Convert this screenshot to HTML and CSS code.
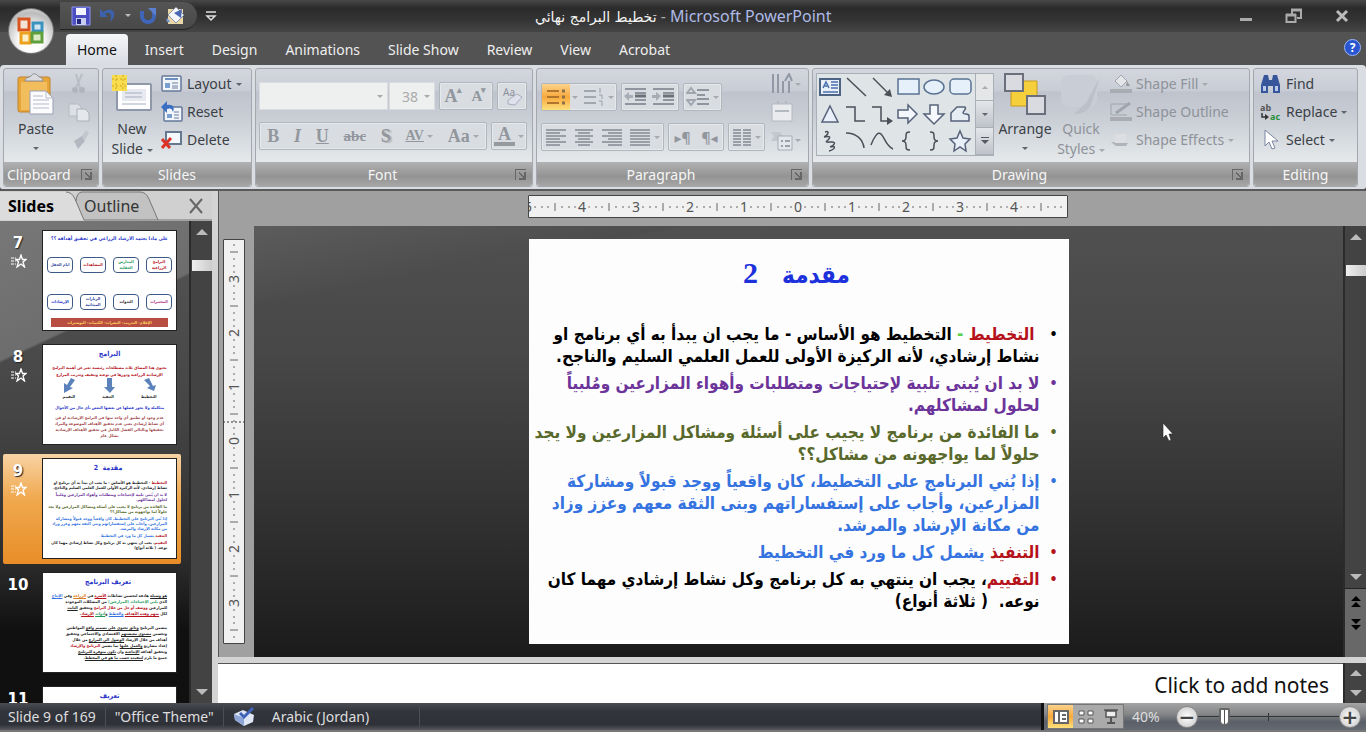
FILE: index.html
```html
<!DOCTYPE html>
<html lang="en">
<head>
    <meta charset="UTF-8">
    <meta name="viewport" content="width=device-width, initial-scale=1.0">
    <title>تخطيط البرامج نهائي - Microsoft PowerPoint</title>
    <link rel="stylesheet" href="styles.css">
</head>
<body>

<header class="titlebar">
    <button class="office-btn" aria-label="Office Button">
        <svg width="28" height="30" viewBox="0 0 28 30">
            <rect x="2" y="3" width="10" height="11" fill="#f3e3d6" stroke="#d9541e" stroke-width="3"/>
            <rect x="16" y="7" width="9" height="8" fill="#cfe6f2" stroke="#3a93bd" stroke-width="3"/>
            <rect x="4" y="17" width="9" height="10" fill="#fbf0c8" stroke="#eda21f" stroke-width="3"/>
            <rect x="15" y="17" width="10" height="9" fill="#dcecc6" stroke="#5f9f3c" stroke-width="3"/>
        </svg>
    </button>
    <div class="quick">
        <button aria-label="Save"><svg width="20" height="20" viewBox="0 0 20 20"><path d="M1 1h18v18H1z" fill="#4a4ec0" stroke="#8f93ee"/><path d="M5 2h10v7H5z" fill="#f4f5ff"/><path d="M5 12h10v7H5z" fill="#c9cdf0"/><path d="M6 13h4v5H6z" fill="#23267c"/></svg></button>
        <button aria-label="Undo"><svg width="18" height="18" viewBox="0 0 18 18"><path d="M1 2v8h8L6 7c4-3 8 0 5 8 7-6 5-14-3-12L4 5z" fill="#3d62ad"/></svg></button>
        <span class="arrow light"></span>
        <button aria-label="Repeat"><svg width="18" height="18" viewBox="0 0 18 18"><path d="M3 4v5c0 8 12 8 12 0V5" fill="none" stroke="#3f64b8" stroke-width="4"/><path d="M9 1h8v8z" fill="#5b80cf"/></svg></button>
        <button aria-label="Shape fill"><svg width="22" height="20" viewBox="0 0 22 20"><path d="M3 3h15v15H3z" fill="#ead9a6"/><path d="M3 9l8-8 8 8-8 8z" fill="#f5f6fa" stroke="#8891a8"/><path d="M9 7l8-4-1 9z" fill="#4b67b3"/><path d="M2 12c-2 4 2 6 3 3z" fill="#7b9ad2"/></svg></button>
    </div>
    <button class="quick-more" aria-label="Customize Quick Access Toolbar"><svg width="12" height="12" viewBox="0 0 12 12"><path d="M1 2h10M2 6h8l-4 4z" fill="none" stroke="#ddd" stroke-width="1.5"/></svg></button>
    <h1 class="doc-title"><span class="doc-name">تخطيط البرامج نهائي</span> <span class="dash">-</span> <span class="app-name">Microsoft PowerPoint</span></h1>
    <div class="win-btns">
        <button aria-label="Minimize"><svg width="14" height="16" viewBox="0 0 14 16"><path d="M1 10h12v3H1z" fill="#aaa"/></svg></button>
        <button aria-label="Restore"><svg width="18" height="18" viewBox="0 0 18 18"><path d="M7 8V3h9v8h-4M1.500 8h9v7h-9z" fill="none" stroke="#aaa" stroke-width="2"/><path d="M6 3h11M1 8h10" stroke="#aaa" stroke-width="3"/></svg></button>
        <button aria-label="Close"><svg width="14" height="14" viewBox="0 0 14 14"><path d="M2 2l10 10M12 2L2 12" stroke="#bbb" stroke-width="3"/></svg></button>
    </div>
</header>

<nav class="tabs">
    <button class="tab active">Home</button>
    <button class="tab">Insert</button>
    <button class="tab">Design</button>
    <button class="tab">Animations</button>
    <button class="tab">Slide Show</button>
    <button class="tab">Review</button>
    <button class="tab">View</button>
    <button class="tab">Acrobat</button>
    <button class="help" aria-label="Help">?</button>
</nav>

<section class="ribbon">
    <div class="group g-clip">
        <div class="group-body">
            <button class="big">
                <svg width="40" height="42" viewBox="0 0 40 42"><rect x="2" y="4" width="32" height="35" rx="2" fill="#e8a63a" stroke="#c1832a"/><path d="M5 9h26v28H5z" fill="#f2bd5c"/><path d="M9 8c0-4 4-3 6-5 2-3 5-3 7 0 2 2 5 1 5 5z" fill="#d8dade" stroke="#8b8e96"/><path d="M14 18h16l7 7v16H14z" fill="#fcfcfe" stroke="#9aa1b5"/><path d="M30 18v7h7M17 23h10M17 27h16M17 31h16M17 35h16" fill="none" stroke="#b4bac9"/></svg>
                <span>Paste</span>
                <span class="arrow"></span>
            </button>
            <div class="rows">
                <button aria-label="Cut"><svg width="22" height="22" viewBox="0 0 22 22"><path d="M8 1l4 14M14 1L8 15" stroke="#b9bdc5" stroke-width="2"/><circle cx="7" cy="17" r="3" fill="#b0b5bd"/><circle cx="14" cy="17" r="3" fill="#b0b5bd"/></svg></button>
                <button aria-label="Copy"><svg width="22" height="22" viewBox="0 0 22 22"><path d="M1 3h9l3 3v9H1z" fill="#dcdfe5" stroke="#b5bac3"/><path d="M9 8h8l4 4v8H9z" fill="#e4e7ec" stroke="#abb0ba"/></svg></button>
                <button aria-label="Format Painter"><svg width="22" height="22" viewBox="0 0 22 22"><path d="M14 7l4-6 3 3-4 7z" fill="#c2c6cd"/><path d="M6 12l8-5 3 5-7 8z" fill="#b3b7bf"/></svg></button>
            </div>
        </div>
        <div class="group-label"><span>Clipboard</span><button class="launch" aria-label="Clipboard options"></button></div>
    </div>

    <div class="group g-slides">
        <div class="group-body">
            <button class="big">
                <svg width="42" height="42" viewBox="0 0 42 42"><rect x="5" y="10" width="36" height="28" rx="2" fill="#8e98a8"/><rect x="7" y="12" width="32" height="24" fill="#fdfdff"/><path d="M11 16h24v12H11z" fill="#e6e9f0"/><path d="M14 20h17M14 24h17M11 31h24" stroke="#a5adbc"/><path d="M1 2h15v16H1z" fill="#f8dd4e"/><path d="M1 6h15M1 13h15M5 2v16M12 2v16" stroke="#cfa51f" stroke-dasharray="2 2"/></svg>
                <span>New</span>
                <span>Slide <span class="arrow"></span></span>
            </button>
            <div class="rows">
                <button><svg width="22" height="20" viewBox="0 0 22 20"><rect x="1" y="2" width="19" height="15" rx="1" fill="#f2f5fa" stroke="#64789b" stroke-width="1.500"/><path d="M4 5h13" stroke="#6f8fc0" stroke-width="2"/><path d="M4 9h5v5H4z" fill="#7b9ed0"/><path d="M11 9h6M11 12h6M11 14h6" stroke="#6b7d9c"/></svg>Layout <span class="arrow"></span></button>
                <button><svg width="22" height="22" viewBox="0 0 22 22"><rect x="3" y="6" width="18" height="14" rx="1" fill="#f2f5fa" stroke="#64789b" stroke-width="1.500"/><path d="M6 13h5v4H6z" fill="#7b9ed0"/><path d="M13 11h5M13 14h5M13 17h5" stroke="#6b7d9c"/><path d="M0 6l6-6v4c6-1 8 2 6 7-1-4-3-4-6-3v4z" fill="#3b6fc4"/></svg>Reset</button>
                <button><svg width="22" height="20" viewBox="0 0 22 20"><rect x="5" y="2" width="15" height="12" fill="#f4f8fd" stroke="#66788f" stroke-width="2"/><path d="M1 9l8 9M10 8l-9 10" stroke="#dd3326" stroke-width="3"/></svg>Delete</button>
            </div>
        </div>
        <div class="group-label"><span>Slides</span></div>
    </div>

    <div class="group g-font">
        <div class="group-body stack">
            <div class="tool-row">
                <div class="combo-wrap">
                    <div class="combo wide"><select aria-label="Font"><option></option></select><span class="arrow pale"></span></div>
                    <div class="combo"><select aria-label="Font size"><option>38</option></select><span class="arrow pale"></span></div>
                </div>
                <div class="tool-box">
                    <button class="serif" aria-label="Grow Font">A<sup>▴</sup></button>
                    <button class="serif small" aria-label="Shrink Font">A<sup>▾</sup></button>
                </div>
                <div class="tool-box">
                    <button aria-label="Clear Formatting"><svg width="24" height="22" viewBox="0 0 24 22"><text x="3" y="11" font-size="10" fill="#8c909c">Aa</text><path d="M8 15l9-6 5 3-7 8-7-1z" fill="#dfe2ec" stroke="#a8acbd"/></svg></button>
                </div>
            </div>
            <div class="tool-row">
                <div class="tool-box grow">
                    <button class="serif">B</button>
                    <button class="serif ital">I</button>
                    <button class="serif under">U</button>
                    <button class="serif strike">abc</button>
                    <button class="serif shadow">S</button>
                    <button class="serif spaced">AV<span class="arrow pale"></span></button>
                    <button class="serif">Aa<span class="arrow pale"></span></button>
                </div>
                <div class="tool-box">
                    <button class="serif color" aria-label="Font Color"><b>A</b><span class="arrow pale"></span></button>
                </div>
            </div>
        </div>
        <div class="group-label"><span>Font</span><button class="launch" aria-label="Font options"></button></div>
    </div>

    <div class="group g-para">
        <div class="group-body">
            <div class="stack">
                <div class="tool-row">
                    <div class="tool-box">
                        <button class="on" aria-label="Bullets"><svg width="24" height="22" viewBox="0 0 24 22"><path d="M3 5h12M3 11h12M3 17h12" stroke="#b0762d" stroke-width="2"/><path d="M18 5h3M18 11h3M18 17h3" stroke="#8d7047" stroke-width="3"/></svg></button>
                        <button aria-label="Numbering"><span class="arrow pale"></span><svg width="24" height="22" viewBox="0 0 24 22"><path d="M3 5h12M3 11h12M3 17h12" stroke="#a2a7ae" stroke-width="2"/><path d="M19 2v5M18 9h3v4M18 15h3v5" fill="none" stroke="#9aa0a8"/></svg><span class="arrow pale"></span></button>
                    </div>
                    <div class="tool-box">
                        <button aria-label="Decrease Indent"><svg width="24" height="22" viewBox="0 0 24 22"><path d="M1 3h21M11 7h11M11 14h11M1 18h21" stroke="#8f959e" stroke-width="2"/><path d="M11 10h11" stroke="#6c7178" stroke-width="3"/><path d="M0 10l5-4v3h4v3H5v3z" fill="#a7adb5"/></svg></button>
                        <button aria-label="Increase Indent"><svg width="24" height="22" viewBox="0 0 24 22"><path d="M1 3h21M11 7h11M11 14h11M1 18h21" stroke="#8f959e" stroke-width="2"/><path d="M11 10h11" stroke="#6c7178" stroke-width="3"/><path d="M9 10L4 6v3H0v3h4v3z" fill="#a7adb5"/></svg></button>
                    </div>
                    <div class="tool-box">
                        <button aria-label="Line Spacing"><svg width="24" height="22" viewBox="0 0 24 22"><path d="M11 4h12M11 9h8M11 13h12M11 18h12" stroke="#8f959e" stroke-width="2"/><path d="M1 7l4-5 4 5zM1 14l4 5 4-5z" fill="none" stroke="#a0a6ae" stroke-width="2"/></svg><span class="arrow pale"></span></button>
                    </div>
                </div>
                <div class="tool-row roomy">
                    <div class="tool-box">
                        <button aria-label="Align Left"><svg width="22" height="20" viewBox="0 0 22 20"><path d="M1 3h20M1 6h14M1 9h20M1 12h14M1 15h20M1 18h14" stroke="#838a94" stroke-width="1.500"/></svg></button>
                        <button aria-label="Center"><svg width="22" height="20" viewBox="0 0 22 20"><path d="M2 3h18M5 6h12M2 9h18M5 12h12M2 15h18M5 18h12" stroke="#838a94" stroke-width="1.500"/></svg></button>
                        <button aria-label="Align Right"><svg width="22" height="20" viewBox="0 0 22 20"><path d="M1 3h20M7 6h14M1 9h20M7 12h14M1 15h20M7 18h14" stroke="#838a94" stroke-width="1.500"/></svg></button>
                        <button aria-label="Justify"><svg width="22" height="20" viewBox="0 0 22 20"><path d="M1 3h20M1 6h20M1 9h20M1 12h20M1 15h20M1 18h20" stroke="#838a94" stroke-width="1.500"/></svg><span class="arrow pale"></span></button>
                    </div>
                    <div class="tool-box">
                        <button class="pil" aria-label="Left-to-Right">▸¶</button>
                        <button class="pil" aria-label="Right-to-Left">¶◂</button>
                    </div>
                    <div class="tool-box">
                        <button aria-label="Columns"><svg width="20" height="20" viewBox="0 0 20 20"><path d="M1 3h8M11 3h8M1 6h8M11 6h8M1 9h8M11 9h8M1 12h8M11 12h8M1 15h8M11 15h8M1 18h8M11 18h8" stroke="#838a94" stroke-width="1.500"/></svg><span class="arrow pale"></span></button>
                    </div>
                </div>
            </div>
            <div class="rows">
                <button aria-label="Text Direction"><svg width="24" height="22" viewBox="0 0 24 22"><path d="M3 1v19M8 1v19M13 8v12M19 8v12" stroke="#9299a6" stroke-width="2"/><path d="M15 8l4-7 3 7" fill="none" stroke="#9299a6" stroke-width="2"/></svg><span class="arrow pale"></span></button>
                <button aria-label="Align Text"><svg width="24" height="22" viewBox="0 0 24 22"><path d="M2 3h20v17H2z" fill="#e9ebee" stroke="#b4b8c0"/><path d="M8 3V0M16 3V0M5 10h14" stroke="#b4b8c0" stroke-width="2"/></svg></button>
                <button aria-label="Convert to SmartArt"><svg width="24" height="22" viewBox="0 0 24 22"><path d="M1 3h9l3 4-3 5H1l3-5z" fill="#c3c7ce"/><path d="M8 7h14v14H8z" fill="#e3e6ea" stroke="#a8adb6"/><path d="M11 12h2M11 17h2M15 12h5M15 17h5" stroke="#9aa0a8" stroke-width="2"/></svg><span class="arrow pale"></span></button>
            </div>
        </div>
        <div class="group-label"><span>Paragraph</span><button class="launch" aria-label="Paragraph options"></button></div>
    </div>

    <div class="group g-draw">
        <div class="group-body">
            <div class="gallery">
                <div class="shapes">
                    <svg viewBox="0 0 26 26"><rect x="3" y="5" width="20" height="16" fill="#e8eff8" stroke="#4c6384" stroke-width="2"/><path d="M6 14l3-6 3 6M7 12h4M14 8h7M14 11h7M14 14h7M6 18h15" fill="none" stroke="#4a72ae"/></svg>
                    <svg viewBox="0 0 26 26"><path d="M4 4l19 18"/></svg>
                    <svg viewBox="0 0 26 26"><path d="M4 4l17 17"/><path d="M23 23l-8-2 6-6z" fill="#4a4f58" stroke="none"/></svg>
                    <svg viewBox="0 0 26 26"><rect x="3" y="5" width="21" height="15" fill="#e6f0fa" stroke="#5a7392"/></svg>
                    <svg viewBox="0 0 26 26"><ellipse cx="13" cy="13" rx="10" ry="7" fill="#e6f0fa" stroke="#5a7392"/></svg>
                    <svg viewBox="0 0 26 26"><rect x="3" y="5" width="21" height="15" rx="4" fill="#e6f0fa" stroke="#5a7392"/></svg>
                    <svg viewBox="0 0 26 26"><path d="M13 5l8 16H5z" fill="#e9f0fa" stroke="#56617a"/></svg>
                    <svg viewBox="0 0 26 26"><path d="M3 6h9v14h10"/></svg>
                    <svg viewBox="0 0 26 26"><path d="M3 6h9v14h8"/><path d="M24 20l-6-4v8z" fill="#4a4f58" stroke="none"/></svg>
                    <svg viewBox="0 0 26 26"><path d="M3 9h10V4l9 9-9 9v-5H3z" fill="#f4f7fc" stroke="#56617a"/></svg>
                    <svg viewBox="0 0 26 26"><path d="M9 4h8v9h6L13 23 3 13h6z" fill="#f4f7fc" stroke="#56617a"/></svg>
                    <svg viewBox="0 0 26 26"><path d="M4 20v-8l6-6h8c2 2-2 4-2 6 1 2 6 0 6 3v5z" fill="#e6eef4" stroke="#56617a"/></svg>
                    <svg viewBox="0 0 26 26"><path d="M8 4c6-2 2 4-1 5 4-1 8-1 4 3-4 3 0 2 4 2s3 3-2 5c6-2 6 2-1 4"/></svg>
                    <svg viewBox="0 0 26 26"><path d="M3 5c10 0 17 6 18 15"/></svg>
                    <svg viewBox="0 0 26 26"><path d="M2 17C5 9 9 3 12 6c4 4 5 12 12 15"/></svg>
                    <svg viewBox="0 0 26 26"><path d="M15 4c-4 0-4 1-4 5 0 3-1 4-4 4 3 0 4 1 4 4 0 4 0 5 4 5"/></svg>
                    <svg viewBox="0 0 26 26"><path d="M9 4c4 0 4 1 4 5 0 3 1 4 4 4-3 0-4 1-4 4 0 4 0 5-4 5"/></svg>
                    <svg viewBox="0 0 26 26"><path d="M13 3l3 7 7 1-5 5 1 7-6-4-6 4 1-7-5-5 7-1z" fill="#e9f0fa" stroke="#56617a"/></svg>
                </div>
                <div class="gallery-nav">
                    <button aria-label="Up"><span class="arrow up pale"></span></button>
                    <button aria-label="Down"><span class="arrow"></span></button>
                    <button aria-label="More"><svg width="10" height="10" viewBox="0 0 10 10"><path d="M1 1h8v1H1zM1 4h8L5 8z" fill="#555a62"/></svg></button>
                </div>
            </div>
            <button class="big">
                <svg width="42" height="42" viewBox="0 0 42 42"><path d="M7 8h26v25H7z" fill="#f5cf3c" stroke="#c89b1e"/><path d="M1 1h18v17H1zM23 23h18v18H23z" fill="#d9dbe0" stroke="#6a6f7b" stroke-width="2"/></svg>
                <span>Arrange</span>
                <span class="arrow"></span>
            </button>
            <button class="big off">
                <svg width="42" height="42" viewBox="0 0 42 42"><rect x="1" y="2" width="36" height="32" rx="8" fill="#c9cdd5"/><path d="M40 4L26 30l-12 11c8 0 14-3 17-9z" fill="#bcc0c9"/></svg>
                <span>Quick</span>
                <span>Styles <span class="arrow pale"></span></span>
            </button>
            <div class="rows off">
                <button><svg width="22" height="20" viewBox="0 0 22 20"><path d="M5 7l6-6 6 6-6 6z" fill="#e3e5e9" stroke="#a0a5ae"/><path d="M17 7l3 5h-4z" fill="#999"/><path d="M0 15h22v4H0z" fill="#a9acb2"/></svg>Shape Fill <span class="arrow pale"></span></button>
                <button><svg width="22" height="20" viewBox="0 0 22 20"><path d="M18 2H1v11h16" fill="none" stroke="#a0a5ae"/><path d="M6 11L20 1" stroke="#a0a5ae" stroke-width="3"/><path d="M0 15h22v4H0z" fill="#a9acb2"/></svg>Shape Outline</button>
                <button><svg width="22" height="20" viewBox="0 0 22 20"><path d="M1 12l5 4h10l2-3z" fill="#b0b4ba"/><path d="M5 4h11v9H5z" fill="#dcdee2"/></svg>Shape Effects <span class="arrow pale"></span></button>
            </div>
        </div>
        <div class="group-label"><span>Drawing</span><button class="launch" aria-label="Drawing options"></button></div>
    </div>

    <div class="group g-edit">
        <div class="group-body">
            <div class="rows">
                <button><svg width="22" height="20" viewBox="0 0 22 20"><path d="M4 1h4l1 5h3l1-5h4l3 10v8h-7v-7H8v7H1v-8z" fill="#36559a"/><path d="M3 12h3v5H3zM15 12h3v5h-3z" fill="#b8c9ea"/></svg>Find</button>
                <button><svg width="22" height="20" viewBox="0 0 22 20"><text x="0" y="9" font-size="9" font-weight="bold" fill="#555">ab</text><text x="10" y="18" font-size="9" font-weight="bold" fill="#27913a">ac</text><path d="M2 11v4h4" fill="none" stroke="#333" stroke-width="1.500"/><path d="M5 12l4 3-4 3z" fill="#333"/></svg>Replace <span class="arrow"></span></button>
                <button><svg width="22" height="20" viewBox="0 0 22 20"><path d="M5 0v16l4-4 3 7 3-1-3-7h6z" fill="#fff" stroke="#7a86a0"/></svg>Select <span class="arrow"></span></button>
            </div>
        </div>
        <div class="group-label"><span>Editing</span></div>
    </div>
</section>

<main class="workspace">
    <aside class="side">
        <div class="side-tabs">
            <button class="side-tab active">Slides</button>
            <button class="side-tab">Outline</button>
            <svg class="side-edge" viewBox="0 0 212 30" preserveAspectRatio="xMinYMin" aria-hidden="true"><path d="M0 1h66q6 0 9 7l9 21H0z" fill="#dcdcdc"/><path d="M76 10q1-9 6-9h58q6 0 9 7l9 21H84z" fill="#c2c2c2"/><path d="M66 1q6 0 9 7l9 21h128M140 1q6 0 9 7l9 21M76 10q1-9 6-9h58" fill="none" stroke="#777"/></svg>
            <button class="side-close" aria-label="Close pane"><svg width="16" height="16" viewBox="0 0 16 16"><path d="M2 1l12 14M14 1L2 15" stroke="#666" stroke-width="2"/></svg></button>
        </div>
        <div class="side-body">
            <ol class="thumbs">
                <li class="thumb-item">
                    <div class="num">7<svg width="16" height="14" viewBox="0 0 16 14"><use href="#anim"/></svg></div>
                    <div class="thumb t7" dir="rtl" lang="ar">
                        <h3>على ماذا يعتمد الارشاد الزراعي في تحقيق أهدافه ؟؟</h3>
                        <div class="boxes">
                            <span class="red">البرامج<br>الزراعية</span><span class="green">المدارس<br>الحقلية</span><span class="red">المشاهدات</span><span class="navy">ايام الحقل</span>
                            <span class="pink">المختبرات</span><span>الندوات</span><span class="navy">الزيارات<br>الميدانية</span><span class="blue">الإرشادات</span>
                        </div>
                        <p class="strip">الإعلام– التدريب– النشرات– الكتيبات– البوسترات</p>
                    </div>
                </li>
                <li class="thumb-item">
                    <div class="num">8<svg width="16" height="14" viewBox="0 0 16 14"><use href="#anim"/></svg></div>
                    <div class="thumb t8" dir="rtl" lang="ar">
                        <h3>البرامج</h3>
                        <p class="red">يحتوي هذا المساق ثلاث مصطلحات رئيسية تعبر عن أهمية البرامج<br>الإرشادية الزراعية ودورها في توعية وتثقيف وتدريب المزارع</p>
                        <div class="arrows"><svg width="14" height="15" viewBox="0 0 14 15"><path d="M1 2l5-2 4 8 3-1-2 6-7-3 3-2z" fill="#5b82bb"/></svg><svg width="14" height="15" viewBox="0 0 14 15"><path d="M4 0h5v9h3l-5 6-6-6h3z" fill="#5b82bb"/></svg><svg width="14" height="15" viewBox="0 0 14 15"><path d="M13 2L9 0 5 7 2 5v10l9-5-3-1z" fill="#5b82bb"/></svg></div>
                        <div class="three"><span>التخطيط</span><span>التنفيذ</span><span>التقييم</span></div>
                        <p class="blue">متكاملة ولا يجوز فصلها عن بعضها البعض بأي حال من الأحوال</p>
                        <p class="brown">عدم وجود او تطبيق أي واحد منها في البرامج الإرشادية او في<br>أي نشاط إرشادي يعني عدم تحقيق الأهداف الموضوعة والمراد<br>تحقيقها وبالتالي الفشل الكامل في تحقيق الأهداف الإرشادية<br>بشكل عام</p>
                    </div>
                </li>
                <li class="thumb-item selected">
                    <div class="num">9<svg width="16" height="14" viewBox="0 0 16 14"><use href="#anim"/></svg></div>
                    <div class="thumb t9" dir="rtl" lang="ar">
                        <h3>مقدمة &nbsp;2</h3>
                        <p><span class="red">التخطيط</span> - التخطيط هو الأساس - ما يجب ان يبدأ به أي برنامج او<br>نشاط إرشادي، لأنه الركيزة الأولى للعمل العلمي السليم والناجح.</p>
                        <p class="purple">لا بد ان يُبنى تلبية لإحتياجات ومتطلبات وأهواء المزارعين ومُلبياً<br>لحلول لمشاكلهم.</p>
                        <p class="olive">ما الفائدة من برنامج لا يجيب على أسئلة ومشاكل المزارعين ولا يجد<br>حلولاً لما يواجهونه من مشاكل؟؟</p>
                        <p class="sky">إذا بُني البرنامج على التخطيط، كان واقعياً ووجد قبولاً ومشاركة<br>المزارعين، وأجاب على إستفساراتهم وبنى الثقة معهم وعزز وزاد<br>من مكانة الإرشاد والمرشد.</p>
                        <p class="sky"><span class="red">التنفيذ</span> يشمل كل ما ورد في التخطيط</p>
                        <p><span class="red">التقييم</span>، يجب ان ينتهي به كل برنامج وكل نشاط إرشادي مهما كان<br>نوعه. ( ثلاثة أنواع)</p>
                    </div>
                </li>
                <li class="thumb-item">
                    <div class="num">10</div>
                    <div class="thumb t10" dir="rtl" lang="ar">
                        <h3>تعريف البرنامج</h3>
                        <p><u>هو وسيلة</u> هادفة لتحسين نشاطات <u class="red">الأسرة</u> في <u class="orange">الزراعة</u> وفي <u class="sky">الإنتاج</u><br>الذي <span class="green">يلبي الإحتياجات (المزارعين)</span> من المشكلات الموجودة<br>للمزارعين <span class="red">ووصف أو حل من خلال البرامج</span> وتحقيق <u>الثابت</u><br>لكل <u class="red">منهم وهذه الأهداف</u> <u class="sky">والخطط</u> و<u class="green">أدوات</u> <u class="red">الإرشاد</u>.</p>
                        <p class="second">يتضمن البرنامج <u>وثائق تحتوي على تصميم واقع</u> المواطنين<br>وتحسين <u>مستوى معيشتهم</u> الاقتصادي والاجتماعي وتحقيق<br>أهداف من خلال الإرشاد <u>الوصول الى المزارع</u> من خلال<br>إعداد مشاريع <u>والعمل عليها</u> بما يضمن <span class="red">البرنامج والإرشاد</span><br>وتحقيق أهدافه <u>الإنتاجية</u> وان <u>تكون متوفرة للبرنامج</u><br>جميع ما يلزم <u>لتنفيذه حسب ما هو في المخطط</u>.</p>
                    </div>
                </li>
                <li class="thumb-item">
                    <div class="num">11</div>
                    <div class="thumb" dir="rtl" lang="ar"><h3>تعريف</h3></div>
                </li>
            </ol>
            <div class="scroll">
                <button aria-label="Scroll up"><span class="tri up"></span></button>
                <span class="handle"></span>
                <button class="last" aria-label="Scroll down"><span class="tri"></span></button>
            </div>
        </div>
    </aside>

    <section class="editor">
        <div class="ruler-top">
            <svg class="ruler-h" width="540" height="23" viewBox="0 0 540 23" aria-hidden="true">
                <defs><pattern id="ticks" width="54" height="23" patternUnits="userSpaceOnUse"><path d="M7 11v2M14 11v2M20 11v2M34 11v2M41 11v2M47 11v2M27 8v8" stroke="#666"/></pattern></defs>
                <rect width="540" height="23" fill="#f1f1f1"/><rect width="540" height="23" fill="url(#ticks)"/>
                <g><text x="0" y="17">5</text><text x="54" y="17">4</text><text x="108" y="17">3</text><text x="162" y="17">2</text><text x="216" y="17">1</text><text x="270" y="17">0</text><text x="324" y="17">1</text><text x="378" y="17">2</text><text x="432" y="17">3</text><text x="486" y="17">4</text></g>
                <path d="M.5.5h539v22H.5z" fill="none" stroke="#444"/>
            </svg>
        </div>
        <div class="canvas-row">
            <div class="ruler-left">
                <svg class="ruler-v" width="22" height="405" viewBox="0 0 22 405" aria-hidden="true">
                    <defs><pattern id="vticks" y="40" width="22" height="54" patternUnits="userSpaceOnUse"><path d="M10 7h2M10 14h2M10 20h2M10 34h2M10 41h2M10 47h2M7 27h8" stroke="#666"/></pattern></defs>
                    <rect width="22" height="405" fill="#f1f1f1"/><rect width="22" height="405" fill="url(#vticks)"/>
                    <path d="M0 183h22" stroke="#333" stroke-dasharray="2 2"/>
                    <g><text transform="translate(16 40) rotate(-90)">3</text><text transform="translate(16 94) rotate(-90)">2</text><text transform="translate(16 148) rotate(-90)">1</text><text transform="translate(16 202) rotate(-90)">0</text><text transform="translate(16 256) rotate(-90)">1</text><text transform="translate(16 310) rotate(-90)">2</text><text transform="translate(16 364) rotate(-90)">3</text></g>
                    <path d="M.5.5h21v404H.5z" fill="none" stroke="#444"/>
                </svg>
            </div>
            <div class="canvas">
                <article class="slide" dir="rtl" lang="ar">
                    <h2>مقدمة<span class="two">2</span></h2>
                    <ul>
                        <li><span class="red first">التخطيط</span> <span class="lime">-</span> التخطيط هو الأساس - ما يجب ان يبدأ به أي برنامج او<br>نشاط إرشادي، لأنه الركيزة الأولى للعمل العلمي السليم والناجح.</li>
                        <li class="purple">لا بد ان يُبنى تلبية لإحتياجات ومتطلبات وأهواء المزارعين ومُلبياً<br>لحلول لمشاكلهم.</li>
                        <li class="olive">ما الفائدة من برنامج لا يجيب على أسئلة ومشاكل المزارعين ولا يجد<br>حلولاً لما يواجهونه من مشاكل؟؟</li>
                        <li class="sky">إذا بُني البرنامج على التخطيط، كان واقعياً ووجد قبولاً ومشاركة<br>المزارعين، وأجاب على إستفساراتهم وبنى الثقة معهم وعزز وزاد<br>من مكانة الإرشاد والمرشد.</li>
                        <li class="red">التنفيذ <span class="sky">يشمل كل ما ورد في التخطيط</span></li>
                        <li class="red">التقييم<span class="black">، يجب ان ينتهي به كل برنامج وكل نشاط إرشادي مهما كان<br>نوعه. &nbsp;( ثلاثة أنواع)</span></li>
                    </ul>
                </article>
                <svg class="cursor" width="12" height="20" viewBox="0 0 12 20"><path d="M1 1v15l3-3 3 6 2-1-2-6h4z" fill="#fff" stroke="#222" stroke-width=".6"/></svg>
            </div>
            <div class="scroll">
                <button aria-label="Previous"><span class="tri up"></span></button>
                <span class="handle"></span>
                <button class="last" aria-label="Next"><span class="tri"></span></button>
                <div class="paging">
                    <button aria-label="Previous Slide"><svg width="12" height="12" viewBox="0 0 12 12"><path d="M6 0l5 5H1zM6 6l5 5H1z"/></svg></button>
                    <button aria-label="Next Slide"><svg width="12" height="12" viewBox="0 0 12 12"><path d="M1 1h10L6 6zM1 7h10l-5 5z"/></svg></button>
                </div>
            </div>
        </div>
        <div class="notes">
            <textarea aria-label="Notes" placeholder="Click to add notes"></textarea>
            <div class="scroll">
                <button aria-label="Notes up"><span class="tri up"></span></button>
                <button class="last" aria-label="Notes down"><span class="tri"></span></button>
            </div>
        </div>
    </section>
</main>

<footer class="status">
    <span class="cell">Slide 9 of 169</span>
    <span class="cell">"Office Theme"</span>
    <svg width="24" height="20" viewBox="0 0 24 20"><path d="M2 7l9-4 11 5-1 7-9 4L3 13z" fill="#dfe6f5"/><path d="M2 7l10 4v8l-9-6z" fill="#8ea6d8"/><path d="M8 6l4 4 9-9" fill="none" stroke="#3f63b8" stroke-width="3"/></svg>
    <span class="cell lang">Arabic (Jordan)</span>
    <div class="status-right">
        <div class="views">
            <button class="on" aria-label="Normal"><svg width="16" height="14" viewBox="0 0 16 14"><path d="M1 1h14v12H1z" fill="#fff" stroke="#666" stroke-width="2"/><path d="M6 1v12M9 5h4M9 9h4" stroke="#666" stroke-width="2"/></svg></button>
            <button aria-label="Slide Sorter"><svg width="16" height="14" viewBox="0 0 16 14"><path d="M1 1h5v4H1zM10 1h5v4h-5zM1 9h5v4H1zM10 9h5v4h-5z" fill="#fff" stroke="#555"/></svg></button>
            <button aria-label="Slide Show"><svg width="16" height="15" viewBox="0 0 16 15"><path d="M1 1h14M3 2h10v6H3z" fill="#eee" stroke="#555" stroke-width="1.500"/><path d="M8 8v5M4 14h8" stroke="#555" stroke-width="2"/></svg></button>
        </div>
        <span class="pct">40%</span>
        <button class="round" aria-label="Zoom Out">−</button>
        <input class="zoom" type="range" min="0" max="100" value="16" aria-label="Zoom">
        <button class="round" aria-label="Zoom In">+</button>
    </div>
</footer>

<svg class="defs" width="0" height="0" aria-hidden="true">
    <symbol id="anim" viewBox="0 0 16 14"><path d="M10 1l1.500 4.500H15L12 8l1.500 5L10 10l-4 3 1.500-5L5 5.500h3.500z" fill="none" stroke="#fff" stroke-width="1.300"/><path d="M0 4h5M0 7h5M0 10h5" stroke="#fff" stroke-dasharray="3 1"/></symbol>
</svg>

</body>
</html>
```

FILE: styles.css
```css
* { box-sizing: border-box; }
body { margin: 0; height: 100vh; display: flex; flex-direction: column; overflow: hidden; background: #535353; color: #3b3f46; font-family: "Noto Sans", "DejaVu Sans", sans-serif; font-size: 14px; }
button { display: flex; align-items: center; justify-content: center; margin: 0; padding: 0; border: 0; background: none; color: inherit; font: inherit; }
h1, h2, h3, p, ul, ol { margin: 0; padding: 0; }
ol, ul { list-style: none; }
svg { flex: none; }
.defs { display: none; }

.arrow { display: inline-block; border: 3px solid transparent; border-top-color: #60646b; border-bottom: 0; vertical-align: middle; }
.arrow.pale { border-top-color: #a6a9ae; }
.arrow.light { border-top-color: #bbb; }
.arrow.up { border: 3px solid transparent; border-bottom-color: #a6a9ae; border-top: 0; }
.tri { border: 6px solid transparent; border-top-color: #bbb; border-bottom: 0; }
.tri.up { border: 6px solid transparent; border-bottom-color: #bbb; border-top: 0; }

/* title bar */
.titlebar { position: relative; z-index: 2; height: 32px; flex: none; display: flex; align-items: center; background: linear-gradient(#474747, #2b2b2b 25%, #333 60%, #454545); }
.office-btn { position: absolute; left: 8px; top: 8px; width: 46px; height: 46px; border-radius: 50%; border: 1px solid #777; background: radial-gradient(circle at 50% 70%, #fff 30%, #bcbcbc 70%, #e6e6e6); }
.quick { margin-left: 60px; height: 28px; display: flex; align-items: center; gap: 8px; padding: 0 10px 0 11px; border-bottom: 1px solid #222; border-radius: 0 14px 14px 0; background: linear-gradient(#555, #484848); }
.quick-more { margin-left: 8px; }
.doc-title { flex: 1; padding-left: 318px; color: #f4f4f4; font-size: 16px; font-weight: normal; line-height: 32px; white-space: nowrap; }
.doc-name { font-family: "DejaVu Sans", sans-serif; font-size: 14px; }
.dash { color: #aaa; }
.app-name { color: #aebbe6; }
.win-btns { display: flex; gap: 32px; padding-right: 17px; }

/* tabs */
.tabs { height: 33px; flex: none; display: flex; align-items: flex-end; padding: 0 5px 0 66px; color: #eee; }
.tab { height: 31px; padding: 0 11px; margin-right: 6px; border-radius: 4px 4px 0 0; }
.tab.active { color: #111; background: linear-gradient(#f6f7f8, #d8dbe2); }
.help { margin: 0 0 9px auto; width: 17px; height: 17px; border-radius: 50%; border: 1px solid #9cb8f5; background: #2956d0; color: #fff; font-size: 12px; font-weight: bold; }

/* ribbon */
.ribbon { flex: none; display: flex; gap: 3px; padding: 3px 8px 2px 3px; background: #dadde1; border-bottom: 2px solid #5a5a5a; border-radius: 4px; }
.group { flex: none; display: flex; flex-direction: column; border: 1px solid #a4a8ae; border-radius: 3px; background: linear-gradient(#d3d6dd, #c9cdd6 18%, #bec3cd 20%, #cbd0d7 45%, #e4e8ea 78%); }
.g-clip { width: 96px; }
.g-slides { width: 150px; }
.g-font { width: 278px; }
.g-para { width: 273px; }
.g-draw { width: 438px; }
.g-edit { width: 105px; }
.group-body { height: 93px; display: flex; padding: 1px 2px 2px; }
.group-label { height: 24px; display: flex; align-items: center; color: #f6f6f6; background: linear-gradient(#b2b2b2, #939393 60%, #a6a6a6); border-radius: 0 0 3px 3px; }
.group-label span { flex: 1; text-align: center; }
.g-clip .group-label span { text-align: left; padding-left: 3px; }
.launch { flex: none; width: 11px; height: 11px; margin: 0 6px; border: solid #666; border-width: 1px 0 0 1px; }
.launch::after { content: ""; width: 6px; height: 6px; margin: 3px 0 0 3px; border: solid #666; border-width: 0 2px 2px 0; background: linear-gradient(45deg, transparent 45%, #666 45% 60%, transparent 60%); }
.big { flex-direction: column; justify-content: flex-start; width: 54px; padding-top: 3px; line-height: 20px; }
.big svg { margin-bottom: 4px; }
.g-clip .big { width: 60px; }
.big > .arrow { margin-top: 8px; }
.rows { display: flex; flex-direction: column; }
.rows button { height: 28px; line-height: 28px; justify-content: flex-start; gap: 4px; white-space: nowrap; }
.off { color: #8e9299; }
.g-clip .rows, .g-slides .rows, .rows.off { padding-left: 2px; }
.g-edit .rows { padding-left: 4px; }

.stack { display: flex; flex-direction: column; gap: 12px; padding: 13px 2px 0; }
.tool-row { display: flex; gap: 4px; }
.tool-box { height: 28px; display: flex; border: 1px solid #b1b6bd; border-radius: 2px; background: #d9dde2; box-shadow: inset 0 0 0 1px #e6e9ec; }
.tool-box button { padding: 0 2px; gap: 3px; }
.roomy .tool-box button { padding: 0 3px; }
.tool-box.grow { flex: 1; justify-content: space-around; }
.g-font .tool-box:not(.grow) button { min-width: 26px; }
.g-font .stack { padding: 13px 5px 0 3px; }
.on { background: linear-gradient(#fbd38b, #f8a93c 50%, #fce07c); }
.combo-wrap { flex: 1; display: flex; gap: 1px; }
.combo { position: relative; width: 46px; height: 28px; background: #eeefef; border: 1px solid #dadcdf; }
.combo.wide { flex: 1; width: auto; }
.combo select { appearance: none; width: 100%; height: 100%; padding: 0 0 0 12px; border: 0; background: none; color: #aaa; font: inherit; }
.combo .arrow { position: absolute; right: 4px; top: 12px; }
.serif { color: #92969d; font-family: "Liberation Serif", serif; font-size: 18px; font-weight: bold; }
.serif sup { font-size: 9px; margin: -12px 0 0 -4px; }
.small { font-size: 15px; }
.ital { font-style: italic; }
.under { text-decoration: underline; }
.strike { text-decoration: line-through; font-size: 15px; }
.shadow { text-shadow: 2px 1px 1px #b4b4b4; }
.spaced { font-size: 14px; text-decoration: underline; }
.color b { line-height: 16px; padding: 0 4px; border-bottom: 4px solid #96999e; }
.g-font .color { min-width: 38px; }
.roomy .tool-box .pil { width: 27px; padding: 0; color: #92969d; font-size: 14px; font-weight: bold; }
.g-para .group-body { justify-content: space-between; }
.g-para .rows button { gap: 1px; width: 36px; }

.gallery { display: flex; width: 178px; height: 83px; margin-top: 3px; border: 1px solid #a9afb7; background: #dfe4e7; }
.g-draw .group-body { padding-left: 3px; }
.g-draw .big { margin-left: 4px; }
.g-draw .big + .big { margin-left: 2px; }
.shapes { display: grid; grid-template-columns: repeat(6, 26px); grid-auto-rows: 27px; flex: 1; }
.shapes svg { width: 26px; height: 26px; fill: none; stroke: #4a4f58; stroke-width: 1.5; }
.gallery-nav { width: 18px; display: flex; flex-direction: column; border-left: 1px solid #a9afb7; }
.gallery-nav button { flex: 1; border-bottom: 1px solid #a9afb7; background: linear-gradient(#e4e6e9, #bfc3c9); }
.gallery-nav button:first-child { background: #e4e6e8; }

/* slides pane */
.workspace { flex: 1; min-height: 0; display: flex; }
.side { width: 212px; flex: none; display: flex; flex-direction: column; }
.side-tabs { position: relative; z-index: 0; height: 30px; flex: none; display: flex; align-items: center; background: #d0d0d0; font-size: 16px; color: #333; }
.side-edge { position: absolute; left: 0; top: 0; width: 212px; height: 30px; z-index: -1; }
.side-tab { width: 76px; padding-left: 8px; justify-content: flex-start; }
.side-tab.active { font-weight: bold; color: #000; }
.side-tab + .side-tab { width: 80px; }
.side-close { margin: 0 8px 0 auto; }
.side-body { flex: 1; min-height: 0; display: flex; background: linear-gradient(155deg, #777 0, #6d6d6d 24%, transparent 24.5%), linear-gradient(#555, #454545 40%, #2d2d2d 70%, #101010 85%); }
.thumbs { flex: 1; min-width: 0; overflow: hidden; padding: 5px 8px 0 3px; }
.thumb-item { height: 110px; margin-bottom: 4px; display: flex; padding: 4px 4px 5px 0; }
.thumb-item.selected { background: linear-gradient(#f8d3a4, #f0a94f 40%, #e88d28); border-radius: 2px; }
.num { width: 39px; padding: 4px 9px 0 0; text-align: center; color: #fff; font: bold 15px "DejaVu Sans", sans-serif; text-shadow: 1px 1px 1px #222; }
.num svg { display: block; margin: 2px 0 0 8px; }
.thumb { flex: 1; min-width: 0; height: 101px; overflow: hidden; background: #fff; border: 1px solid #222; color: #222; padding: 0 6px; font: 4px/6px "DejaVu Sans Condensed", "DejaVu Sans", sans-serif; white-space: nowrap; }
.thumb h3 { text-align: center; color: #2a35c8; font-size: 7px; line-height: 18px; }
.t7 h3 { font-size: 5px; line-height: 15px; }
.thumb.t7 { padding: 0 2px; }
.boxes { display: grid; grid-template-columns: repeat(4, 26px); gap: 21px 7px; justify-content: center; padding-top: 11px; font-weight: bold; }
.boxes span { height: 16px; display: flex; align-items: center; justify-content: center; text-align: center; border: 1px solid #3d5a86; border-radius: 4px; }
.strip { margin: 8px 6px 0; text-align: center; line-height: 9px; background: #b84d42; color: #ffd75a; font-weight: bold; }
.t8 { text-align: center; font-weight: bold; }
.t8 .red { line-height: 7px; margin-top: 1px; }
.t8 .blue { line-height: 14px; }
.arrows, .three { display: flex; justify-content: space-around; }
.three { line-height: 8px; }
.t9 h3, .t9 p { font-weight: bold; }
.thumb.t9 { padding-right: 9px; line-height: 5px; }
.t9 h3 { margin-bottom: 3px; }
.t9 p { margin-bottom: 2px; }
.thumb.t10 { padding-right: 9px; }
.t10 p { font-weight: bold; margin-top: 2px; }
.t10 .second { margin-top: 8px; }

.red { color: #b5121b; }
.green { color: #1d9a5a; }
.navy { color: #2a3a9a; }
.blue { color: #2a35c8; }
.pink { color: #b02a86; }
.brown { color: #a3474a; }
.orange { color: #d97a1c; }
.purple { color: #6c349a; }
.olive { color: #58692b; }
.sky { color: #3573e0; }
.lime { color: #5ad04a; }
.black { color: #000; }

/* scroll bars */
.scroll { width: 23px; flex: none; display: flex; flex-direction: column; align-items: center; background: #434343; border-left: 2px solid #2b2b2b; }
.scroll button { width: 21px; height: 22px; }
.scroll .last { margin-top: auto; }
.handle { width: 20px; height: 11px; margin-top: 17px; background: linear-gradient(90deg, #eee, #ccc); }

/* editor */
.editor { flex: 1; min-width: 0; display: flex; flex-direction: column; border-left: 6px solid #d4d4d4; box-shadow: inset 1px 0 #555; background: #a0a0a0; }
.ruler-top { height: 35px; flex: none; display: flex; justify-content: center; padding: 4px 25px 0 36px; }
.ruler-h text, .ruler-v text { font-size: 14px; fill: #555; text-anchor: middle; stroke: #f1f1f1; stroke-width: 5px; paint-order: stroke; }
.canvas-row { flex: 1; min-height: 0; display: flex; }
.ruler-left { width: 36px; flex: none; padding: 13px 0 0 5px; }
.canvas { position: relative; flex: 1; min-width: 0; display: flex; justify-content: center; align-items: flex-start; padding-top: 13px; background: linear-gradient(170deg, #5c5c5c 0, #4d4d4d 12%, transparent 12.5%), linear-gradient(#505050, #474747 30%, #333 65%, #1b1b1b); }
.slide { width: 540px; height: 405px; padding: 0 12px 0 8px; background: #fdfdfd; color: #000; font-family: "DejaVu Sans Condensed", "DejaVu Sans", sans-serif; font-weight: bold; }
.slide h2 { height: 84px; padding-top: 14px; text-align: center; color: #1c31dc; font-size: 24px; line-height: 40px; }
.two { margin-right: 24px; font-family: "Liberation Serif", serif; font-size: 30px; }
.slide li { position: relative; margin-bottom: 5px; padding-right: 17px; font-size: 17px; line-height: 22px; white-space: nowrap; }
.slide li::before { content: "•"; position: absolute; right: -1px; font-size: 14px; }
.first { padding-right: 5px; }
.cursor { position: absolute; left: 908px; top: 196px; }
.paging { align-self: stretch; height: 69px; padding-top: 2px; background: #686868; border-top: 1px solid #222; }
.notes { height: 46px; flex: none; display: flex; border-top: 6px solid #d4d4d4; }
.notes textarea { flex: 1; height: 40px; padding: 6px 14px 0; border: 0; border-top: 1px solid #555; resize: none; background: #fff; text-align: right; font: 21px/30px "Noto Sans", sans-serif; overflow: hidden; }
.notes textarea::placeholder { color: #111; opacity: 1; }
.notes .scroll button { height: 20px; }

/* status bar */
.status { height: 29px; flex: none; display: flex; align-items: center; color: #dedede; background: linear-gradient(#4a4c52, #33353d 30%, #2f3138 80%, #55575c); border-bottom: 2px solid #777; }
.cell { padding: 0 9px 0 8px; margin-right: 1px; border-right: 1px solid #4c4e54; white-space: nowrap; line-height: 20px; }
.status > svg { margin: 0 8px 0 7px; }
.lang { padding-right: 50px; }
.status-right { margin-left: auto; align-self: stretch; display: flex; align-items: center; padding-right: 5px; border-left: 3px solid #111; background: linear-gradient(#a4a4a4, #858789 40%, #5a5f68 70%, #666a72); }
.views { display: flex; margin: 0 8px 0 3px; border: 1px solid #777; background: #aaa; }
.views button { width: 25px; height: 23px; }
.pct { width: 44px; }
.round { width: 22px; height: 22px; border-radius: 50%; border: 1px solid #888; background: radial-gradient(#fff, #c4c4c4); color: #444; font: bold 20px/18px "DejaVu Sans", sans-serif; }
.zoom { appearance: none; width: 141px; height: 22px; margin: 0; background: linear-gradient(#333, #333) center / 100% 1px no-repeat, linear-gradient(#333, #333) center / 1px 8px no-repeat; }
.zoom::-webkit-slider-thumb { appearance: none; width: 11px; height: 18px; border: 2px solid #666; border-radius: 2px 2px 6px 6px; background: linear-gradient(90deg, #fff 40%, #555 40% 60%, #fff 60%); }
```
